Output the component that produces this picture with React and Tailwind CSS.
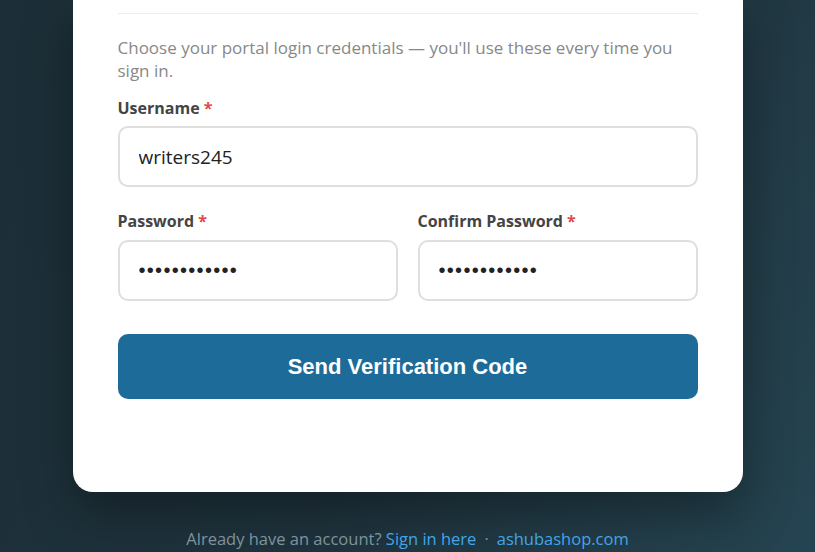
export default function App() {
  return (
    <div className="min-h-screen w-full overflow-hidden bg-[linear-gradient(120deg,#1c2e37_0%,#1f333d_55%,#254451_100%)] font-['Open_Sans','Noto_Sans',sans-serif]">
      <div className="mx-auto w-[670px] rounded-b-[20px] bg-white px-[45px] pt-[13px] pb-[93px] shadow-[0_20px_50px_rgba(0,0,0,0.35)]">
        <div className="h-px bg-[#ececec]" />

        <p className="mt-[22px] text-[17px] leading-[23px] text-[#888]">
          Choose your portal login credentials — you'll use these every time you sign in.
        </p>

        <form className="mt-[14px]" onSubmit={(e) => e.preventDefault()}>
          <label className="block text-[16px] font-bold leading-[24px] text-[#444]">
            Username <span className="text-[#e04a4a]">*</span>
          </label>
          <input
            type="text"
            defaultValue="writers245"
            className="mt-[6px] block h-[61px] w-full rounded-[10px] border-2 border-[#dedede] px-[19px] text-[19px] text-[#222] outline-none"
          />

          <div className="mt-[22px] grid grid-cols-2 gap-[20px]">
            <div>
              <label className="block text-[16px] font-bold leading-[24px] text-[#444]">
                Password <span className="text-[#e04a4a]">*</span>
              </label>
              <input
                type="password"
                defaultValue="writers24500"
                className="mt-[7px] block h-[61px] w-full rounded-[10px] border-2 border-[#dedede] px-[19px] font-['Liberation_Sans',Arial,sans-serif] text-[20px] tracking-[1.3px] text-[#222] outline-none"
              />
            </div>
            <div>
              <label className="block text-[16px] font-bold leading-[24px] text-[#444]">
                Confirm Password <span className="text-[#e04a4a]">*</span>
              </label>
              <input
                type="password"
                defaultValue="writers24500"
                className="mt-[7px] block h-[61px] w-full rounded-[10px] border-2 border-[#dedede] px-[19px] font-['Liberation_Sans',Arial,sans-serif] text-[20px] tracking-[1.3px] text-[#222] outline-none"
              />
            </div>
          </div>

          <button
            type="submit"
            className="mt-[33px] block h-[65px] w-full rounded-[10px] bg-[#1c6b99] font-['Liberation_Sans',Arial,sans-serif] text-[22px] font-bold text-white"
          >
            Send Verification Code
          </button>
        </form>
      </div>

      <p className="mt-[35px] text-center text-[16.5px] leading-[24px] text-[#7f939e]">
        Already have an account?{" "}
        <a href="#" className="text-[#42a5e8]">Sign in here</a>
        <span className="mx-[8px]">·</span>
        <a href="#" className="text-[#42a5e8]">ashubashop.com</a>
      </p>
    </div>
  )
}
